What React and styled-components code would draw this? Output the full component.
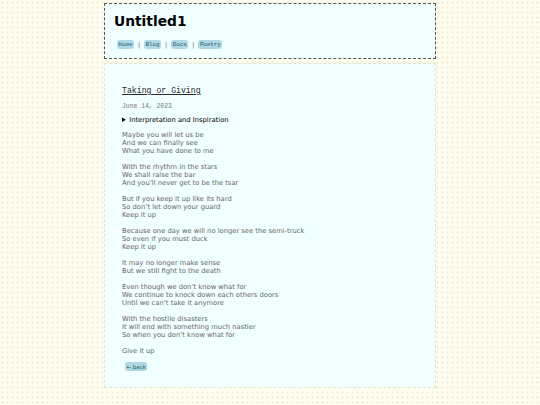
import React from "react";
import styled, { createGlobalStyle } from "styled-components";

const Global = createGlobalStyle`
  html, body { margin: 0; padding: 0; }
  body {
    background-color: #fffdf0;
    background-image: radial-gradient(circle, #eeeacb 0.8px, transparent 1.2px);
    background-size: 5px 5px;
    font-family: "DejaVu Sans", sans-serif;
    min-height: 405px;
  }
`;

const Page = styled.div`
  width: 332px;
  margin: 0 auto;
  padding-top: 3px;
  display: flex;
  flex-direction: column;
  gap: 4px;
`;

const Header = styled.header`
  box-sizing: border-box;
  height: 56px;
  border: 1px dashed #555;
  background: #f0ffff;
  padding: 8px 9px 0;
`;

const SiteTitle = styled.h1`
  margin: 0;
  font-family: "DejaVu Sans", sans-serif;
  font-size: 13.8px;
  line-height: 18px;
  font-weight: bold;
  color: #000;
`;

const Nav = styled.nav`
  display: flex;
  align-items: center;
  gap: 4px;
  margin-top: 10px;
  padding-left: 3px;
  font-family: "Courier New", "Liberation Mono", monospace;
  font-size: 5.8px;
  color: #555;
`;

const Pill = styled.a`
  display: inline-block;
  background: #add8e6;
  color: #3a5560;
  border-radius: 3px;
  padding: 1.5px 1.5px;
  line-height: 6px;
  text-decoration: none;
`;

const Sep = styled.span`
  color: #666;
  font-family: "DejaVu Sans", sans-serif;
  font-size: 6.5px;
`;

const Main = styled.main`
  box-sizing: border-box;
  height: 325px;
  border: 1px dashed #e4e4cc;
  background: #f0ffff;
  padding: 22px 17px 0;
`;

const PostTitle = styled.h2`
  margin: 0;
  font-family: "Courier New", "Liberation Mono", monospace;
  font-size: 8.2px;
  line-height: 10px;
  font-weight: normal;
  color: #2a2a2a;
  text-decoration: underline;
`;

const PostDate = styled.div`
  margin-top: 7px;
  font-family: "Courier New", "Liberation Mono", monospace;
  font-size: 6.4px;
  line-height: 8px;
  color: #777;
`;

const Details = styled.details`
  margin-top: 5px;
  font-size: 6.75px;
  line-height: 8px;
  color: #000;
  summary { cursor: pointer; }
`;

const Poem = styled.div`
  margin-top: 7px;
  display: flex;
  flex-direction: column;
  gap: 8px;
  font-size: 6.75px;
  line-height: 8px;
  color: #666;
`;

const Stanza = styled.p`
  margin: 0;
`;

const BackRow = styled.div`
  margin-top: 7px;
  padding-left: 3px;
  font-family: "DejaVu Sans", sans-serif;
  font-size: 5.5px;
`;

const stanzas = [
  ["Maybe you will let us be", "And we can finally see", "What you have done to me"],
  ["With the rhythm in the stars", "We shall raise the bar", "And you\u2019ll never get to be the tsar"],
  ["But if you keep it up like its hard", "So don\u2019t let down your guard", "Keep it up"],
  ["Because one day we will no longer see the semi-truck", "So even if you must duck", "Keep it up"],
  ["It may no longer make sense", "But we still fight to the death"],
  ["Even though we don\u2019t know what for", "We continue to knock down each others doors", "Until we can\u2019t take it anymore"],
  ["With the hostile disasters", "It will end with something much nastier", "So when you don\u2019t know what for"],
  ["Give it up"],
];

export default function App() {
  return (
    <>
      <Global />
      <Page>
        <Header>
          <SiteTitle>Untitled1</SiteTitle>
          <Nav>
            <Pill href="#">Home</Pill>
            <Sep>|</Sep>
            <Pill href="#">Blog</Pill>
            <Sep>|</Sep>
            <Pill href="#">Docs</Pill>
            <Sep>|</Sep>
            <Pill href="#">Poetry</Pill>
          </Nav>
        </Header>
        <Main>
          <PostTitle>Taking or Giving</PostTitle>
          <PostDate>June 14, 2023</PostDate>
          <Details>
            <summary>Interpretation and Inspiration</summary>
          </Details>
          <Poem>
            {stanzas.map((s, i) => (
              <Stanza key={i}>
                {s.map((l, j) => (
                  <React.Fragment key={j}>
                    {l}
                    {j < s.length - 1 && <br />}
                  </React.Fragment>
                ))}
              </Stanza>
            ))}
          </Poem>
          <BackRow>
            <Pill href="#">← back</Pill>
          </BackRow>
        </Main>
      </Page>
    </>
  );
}
